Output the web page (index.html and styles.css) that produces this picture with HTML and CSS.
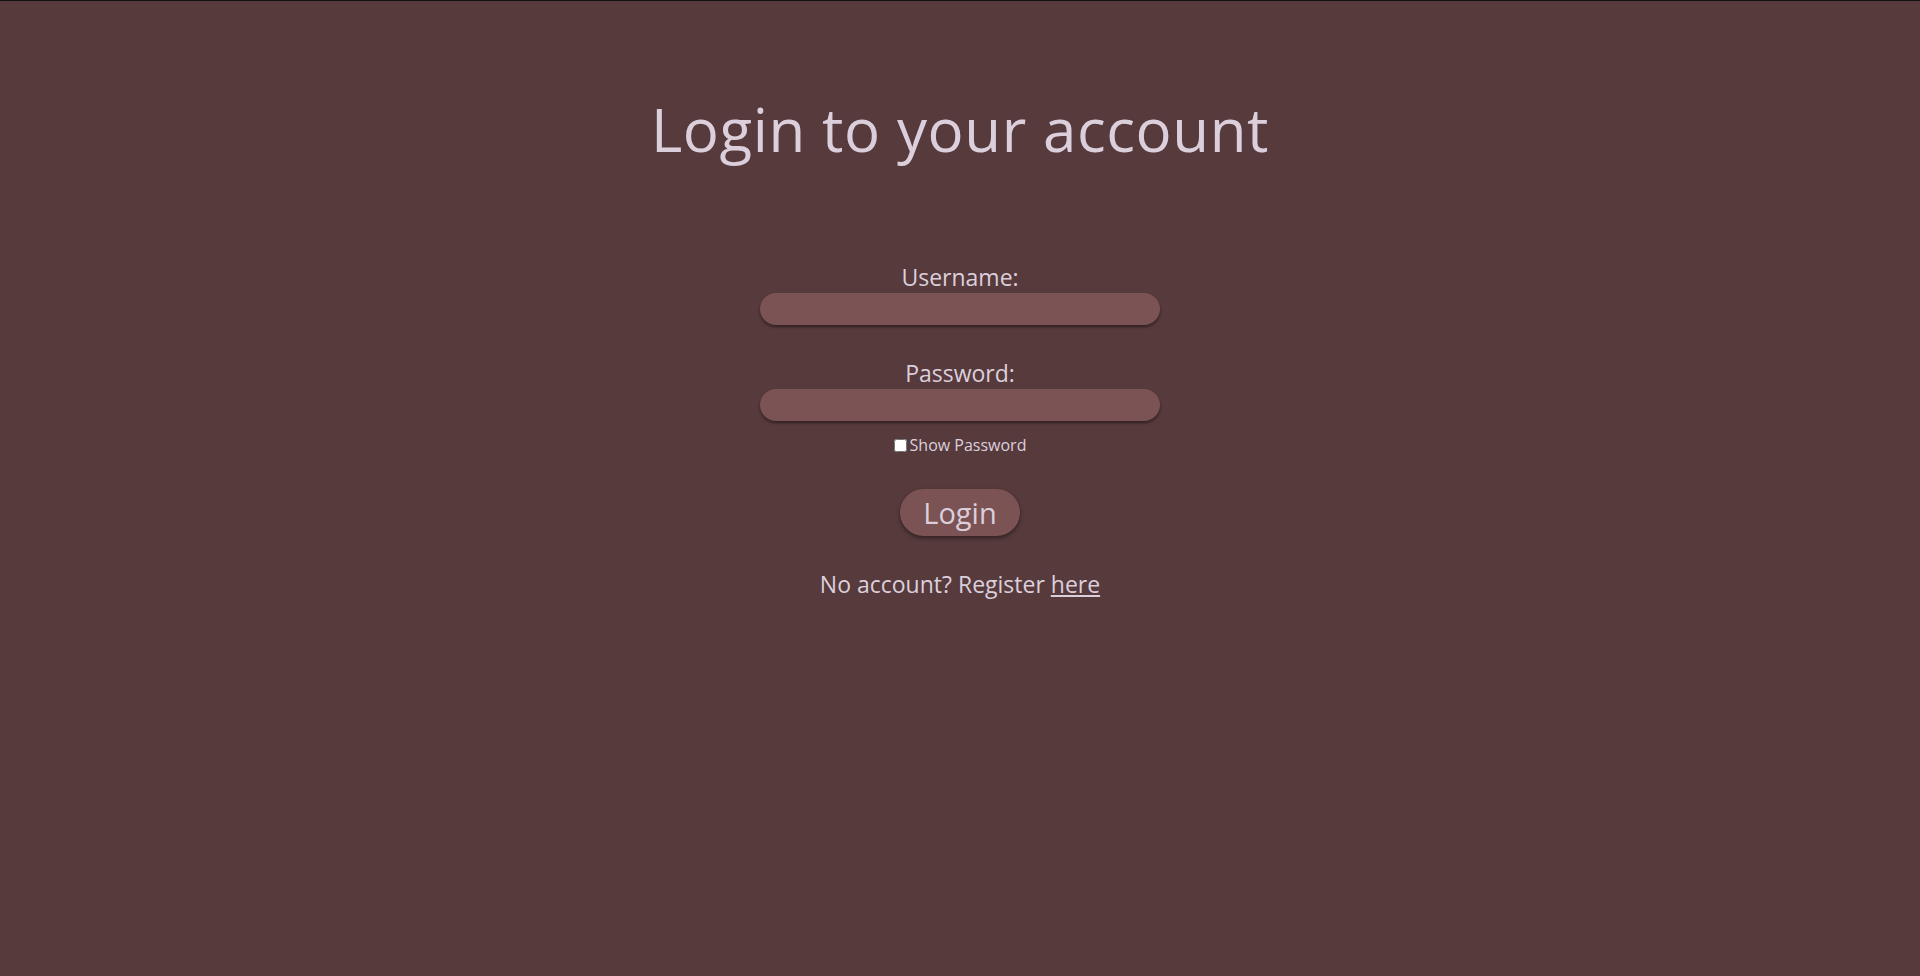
FILE: index.html
```html
<!DOCTYPE html>
<html lang="en">
<head>
<meta charset="utf-8">
<title>Login</title>
<link rel="stylesheet" href="styles.css">
</head>
<body>
<main class="page">
  <h1 class="title">Login to your account</h1>
  <form class="login-form">
    <label class="field-label" for="username">Username:</label>
    <input class="field-input" id="username" type="text">
    <label class="field-label field-label--second" for="password">Password:</label>
    <input class="field-input" id="password" type="password">
    <label class="show-row"><input class="show-check" type="checkbox">Show Password</label>
    <button class="login-btn" type="button">Login</button>
    <p class="register">No account? Register <a class="register-link" href="#">here</a></p>
  </form>
</main>
</body>
</html>
```
FILE: styles.css
```css
html, body {
  margin: 0;
  padding: 0;
}
body {
  background: #573a3c;
  border-top: 1px solid #111;
  min-height: 975px;
  box-sizing: border-box;
  color: #dccfdc;
  font-family: "Open Sans", "Noto Sans", sans-serif;
}
.page {
  display: flex;
  flex-direction: column;
  align-items: center;
}
.title {
  margin: 93px 0 0;
  font-size: 60px;
  line-height: 70px;
  font-weight: 400;
  letter-spacing: 0.6px;
}
.login-form {
  display: flex;
  flex-direction: column;
  align-items: center;
  width: 400px;
  margin-top: 98px;
}
.field-label {
  font-size: 23px;
  line-height: 30px;
  margin-bottom: 1px;
}
.field-label--second {
  margin-top: 33px;
}
.field-input {
  box-sizing: border-box;
  width: 400px;
  height: 32px;
  border: none;
  border-radius: 16px;
  background: #7b5354;
  box-shadow: 0 2px 3px rgba(0, 0, 0, 0.45);
  color: #dccfdc;
  padding: 0 14px;
  font-family: inherit;
  font-size: 16px;
  outline: none;
}
.show-row {
  display: flex;
  align-items: center;
  margin-top: 14px;
  font-size: 16px;
  line-height: 20px;
}
.show-check {
  width: 13px;
  height: 13px;
  margin: 0 3px 0 0;
}
.login-btn {
  margin-top: 34px;
  width: 120px;
  height: 47px;
  border: none;
  border-radius: 24px;
  background: #7b5354;
  box-shadow: 0 2px 4px rgba(0, 0, 0, 0.45);
  color: #dccfdc;
  font-family: inherit;
  font-size: 29px;
  font-weight: 500;
  line-height: 1;
  padding: 0;
}
.register {
  margin: 35px 0 0;
  font-size: 23px;
  line-height: 26px;
}
.register-link {
  color: #dccfdc;
}
```
